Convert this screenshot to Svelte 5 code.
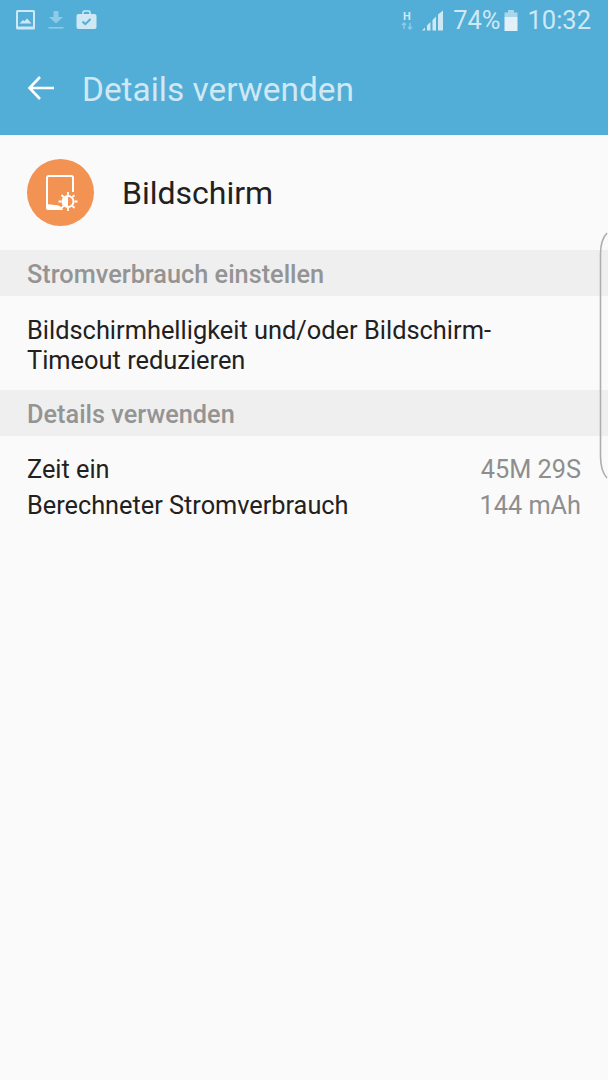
<script lang="ts">
  const usage = [
    { label: 'Zeit ein', value: '45M 29S' },
    { label: 'Berechneter Stromverbrauch', value: '144 mAh' }
  ];
</script>

<div class="screen">
  <header class="appbar">
    <div class="status">
      <div class="notif">
        <svg class="ic" width="20" height="22" viewBox="0 0 20 22">
          <rect x="0" y="1" width="19" height="19.5" rx="1.5" fill="#cfe8f4" />
          <rect x="2" y="3" width="15" height="14.5" fill="#52aed6" />
          <path d="M3.5 14.5 L7 11 L8.5 12.2 L11 9.5 L15.5 14.5 Z" fill="#cfe8f4" />
        </svg>
        <svg class="ic dl" width="16" height="20" viewBox="0 0 16 20">
          <path d="M5.5 1 H10.5 V7 H15 L8 13.5 L1 7 H5.5 Z" fill="#8fcbe5" />
          <rect x="0.5" y="17" width="15" height="1.6" fill="#8fcbe5" />
        </svg>
        <svg class="ic" width="21" height="20" viewBox="0 0 21 20">
          <path d="M7 4 V2.5 Q7 1 8.5 1 H12.5 Q14 1 14 2.5 V4" fill="none" stroke="#cfe8f4" stroke-width="1.6" />
          <rect x="0.5" y="4" width="20" height="15" rx="2" fill="#cfe8f4" />
          <path d="M6.5 11.5 L9.3 14.2 L14.5 9" fill="none" stroke="#52aed6" stroke-width="2" />
        </svg>
      </div>
      <div class="sys">
        <svg class="net" width="12" height="20" viewBox="0 0 12 20">
          <text x="6" y="9.5" text-anchor="middle" class="h">H</text>
          <path d="M3 13 V19 M1 15 L3 13 L5 15 M9 19 V13 M7 17 L9 19 L11 17" stroke="#8fcbe5" stroke-width="1.4" fill="none" />
        </svg>
        <svg class="signal" width="22" height="21" viewBox="0 0 22 21">
          <path d="M0 20.5 L3 17.5 V20.5 Z M5 20.5 V15.5 L8.5 12 V20.5 Z M10.5 20.5 V10 L14 6.5 V20.5 Z" fill="#cfe8f4" />
          <path d="M16 20.5 V4.5 L21 0.5 V20.5 Z" fill="#cfe8f4" />
        </svg>
        <span class="pct">74%</span>
        <svg class="batt" width="14" height="21" viewBox="0 0 14 21">
          <rect x="4" y="0" width="6" height="3" fill="#a8d7ea" />
          <rect x="0.5" y="2.5" width="13" height="4.5" fill="#a8d7ea" />
          <rect x="0.5" y="7" width="13" height="14" fill="#e2f1f8" />
        </svg>
        <span class="time">10:32</span>
      </div>
    </div>
    <div class="toolbar">
      <svg width="28" height="26" viewBox="0 0 28 26">
        <path d="M27 13 H3 M13 2 L2.5 13 L13 24" fill="none" stroke="#ffffff" stroke-width="2.6" />
      </svg>
      <h1>Details verwenden</h1>
    </div>
  </header>

  <div class="app-row">
    <div class="app-icon">
      <svg width="50" height="50" viewBox="0 0 50 50">
        <path d="M11 38 V10 Q11 8 13 8 H35 Q37 8 37 10 V24" fill="none" stroke="#fff" stroke-width="2" />
        <path d="M10 36 V40 Q10 42 13 42 H27 Q25 37 19 37 Z" fill="#fff" />
        <circle cx="32" cy="33.5" r="5.5" fill="none" stroke="#fff" stroke-width="2" />
        <path d="M32 28 A5.5 5.5 0 0 0 32 39 Z" fill="#fff" />
        <path d="M32 24 V27 M32 40 V43 M22.5 33.5 H25.5 M38.5 33.5 H41.5 M25.5 27 L27.5 29 M36.5 38 L38.5 40 M25.5 40 L27.5 38 M36.5 29 L38.5 27" stroke="#fff" stroke-width="1.8" />
      </svg>
    </div>
    <span class="app-name">Bildschirm</span>
  </div>

  <div class="section">Stromverbrauch einstellen</div>
  <p class="tip">Bildschirmhelligkeit und/oder Bildschirm-<br />Timeout reduzieren</p>

  <div class="section">Details verwenden</div>
  <div class="rows">
    {#each usage as row}
      <div class="row">
        <span>{row.label}</span>
        <span class="val">{row.value}</span>
      </div>
    {/each}
  </div>

  <svg class="edge" width="10" height="248" viewBox="0 0 10 248">
    <path d="M9 1 Q2.5 8 2.5 22 V224 Q2.5 239 9 246" fill="none" stroke="#aeaeae" stroke-width="1.6" />
  </svg>
</div>

<style>
  :global(body) { margin: 0; }

  .screen {
    position: relative;
    width: 608px;
    height: 1080px;
    overflow: hidden;
    background: #fafafa;
    font-family: Roboto, "Noto Sans", sans-serif;
    color: #212121;
  }

  .appbar {
    height: 135px;
    background: #52aed6;
  }

  .status {
    height: 40px;
    padding: 0 17px 0 16px;
    display: flex;
    align-items: center;
    justify-content: space-between;
  }
  .notif { display: flex; align-items: center; gap: 12px; }
  .ic { display: block; }
  .sys { display: flex; align-items: center; }
  .net { margin-right: 9px; }
  .h { font-size: 11px; font-weight: 700; fill: #cfe8f4; font-family: Roboto, sans-serif; }
  .signal { margin-right: 9px; }
  .pct, .time { font-size: 25.5px; color: #cfe8f4; line-height: 40px; }
  .batt { margin: 0 9px 0 4px; }

  .toolbar {
    height: 95px;
    box-sizing: border-box;
    padding-left: 27px;
    display: flex;
    align-items: center;
    gap: 27px;
  }
  h1 {
    margin: 0;
    padding-top: 3px;
    font-size: 33.4px;
    font-weight: 400;
    color: #cfe8f4;
  }

  .app-row {
    height: 115px;
    box-sizing: border-box;
    padding-left: 27px;
    display: flex;
    align-items: center;
    gap: 28px;
  }
  .app-icon {
    width: 67px;
    height: 67px;
    border-radius: 50%;
    background: #f29253;
    display: flex;
    align-items: center;
    justify-content: center;
  }
  .app-name { font-size: 32px; padding-top: 1px; }

  .section {
    height: 46px;
    line-height: 49px;
    padding-left: 27px;
    background: #efefef;
    color: #949494;
    font-size: 25.3px;
    font-weight: 500;
  }

  .tip {
    margin: 0;
    height: 94px;
    box-sizing: border-box;
    padding: 19px 27px 0;
    font-size: 25.4px;
    line-height: 30px;
  }

  .rows { padding: 16px 27px 0; }
  .row {
    display: flex;
    justify-content: space-between;
    font-size: 25.3px;
    line-height: 36px;
  }
  .val { color: #8e8e8e; }

  .edge {
    position: absolute;
    top: 232px;
    right: 0;
  }
</style>
